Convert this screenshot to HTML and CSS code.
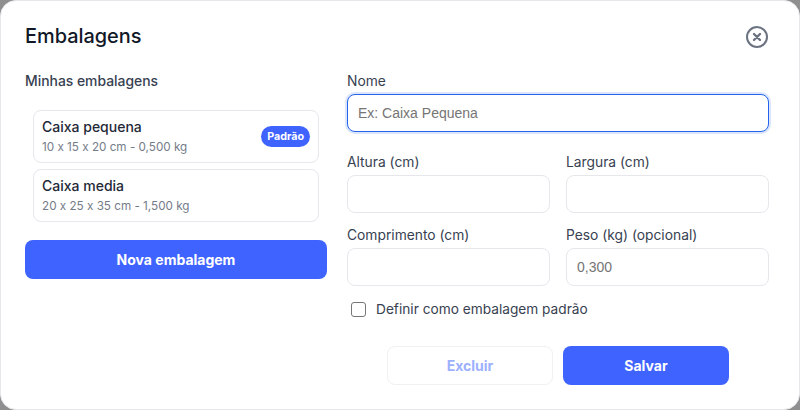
FILE: index.html
```html
<!DOCTYPE html>
<html lang="en">
<head>
    <meta charset="UTF-8">
    <title>Embalagens</title>
    <link rel="stylesheet" href="styles.css">
</head>
<body>
    <div class="modal">
        <!-- Header -->
        <div class="modal-header">
            <h1>Embalagens</h1>
            <button class="close-btn" aria-label="Fechar">
                <svg width="24" height="24" viewBox="0 0 24 24" fill="none" stroke="#6b7280" stroke-width="2" stroke-linecap="round">
                    <circle cx="12" cy="12" r="10"/>
                    <path d="M9 9l6 6M15 9l-6 6" stroke-width="2.4"/>
                </svg>
            </button>
        </div>

        <div class="modal-body">
            <!-- Saved boxes -->
            <div class="box-column">
                <h2>Minhas embalagens</h2>
                <div class="box-list">
                    <div class="box-card">
                        <div class="box-text">
                            <div class="box-name">Caixa pequena</div>
                            <div class="box-info">10 x 15 x 20 cm - 0,500 kg</div>
                        </div>
                        <span class="badge">Padrão</span>
                    </div>
                    <div class="box-card">
                        <div class="box-text">
                            <div class="box-name">Caixa media</div>
                            <div class="box-info">20 x 25 x 35 cm - 1,500 kg</div>
                        </div>
                    </div>
                </div>
                <button class="btn btn-primary btn-new">Nova embalagem</button>
            </div>

            <!-- Form -->
            <form class="box-form">
                <div class="field">
                    <label for="nome">Nome</label>
                    <input type="text" id="nome" class="focused" placeholder="Ex: Caixa Pequena">
                </div>
                <div class="field-grid">
                    <div class="field">
                        <label for="altura">Altura (cm)</label>
                        <input type="text" id="altura">
                    </div>
                    <div class="field">
                        <label for="largura">Largura (cm)</label>
                        <input type="text" id="largura">
                    </div>
                    <div class="field">
                        <label for="comprimento">Comprimento (cm)</label>
                        <input type="text" id="comprimento">
                    </div>
                    <div class="field">
                        <label for="peso">Peso (kg) (opcional)</label>
                        <input type="text" id="peso" placeholder="0,300">
                    </div>
                </div>
                <label class="check-row">
                    <span class="check-box"></span>
                    Definir como embalagem padrão
                </label>
                <div class="form-actions">
                    <button type="button" class="btn btn-disabled">Excluir</button>
                    <button type="button" class="btn btn-primary">Salvar</button>
                </div>
            </form>
        </div>
    </div>
</body>
</html>
```

FILE: styles.css
```css
body {
    margin: 0;
    width: 800px;
    height: 410px;
    overflow: hidden;
    background: #8f8f8f;
    font-family: "Inter", "Liberation Sans", sans-serif;
    font-feature-settings: "calt" 0;
    color: #1f2937;
}

.modal {
    box-sizing: border-box;
    width: 800px;
    height: 410px;
    background: #fff;
    border: 1px solid #e5e7eb;
    border-radius: 16px;
    padding: 0 30px 0 24px;
}

/* Header */
.modal-header {
    display: flex;
    justify-content: space-between;
    align-items: center;
    height: 71px;
}

.modal-header h1 {
    margin: 0 0 2px;
    font-size: 19.9px;
    font-weight: 500;
    color: #111827;
}

.close-btn {
    display: flex;
    padding: 0;
    border: none;
    background: none;
}

/* Body */
.modal-body {
    display: flex;
    gap: 20px;
}

.box-column {
    width: 302px;
    flex-shrink: 0;
}

.box-column h2 {
    margin: 1px 0 20px;
    font-size: 13.9px;
    line-height: 17px;
    font-weight: 500;
    color: #374151;
}

.box-list {
    display: flex;
    flex-direction: column;
    gap: 6px;
    padding: 0 8px;
    margin-bottom: 18px;
}

.box-card {
    box-sizing: border-box;
    height: 53px;
    display: flex;
    justify-content: space-between;
    align-items: center;
    padding: 0 8px;
    border: 1px solid #e5e7eb;
    border-radius: 8px;
}

.box-text {
    padding-bottom: 1px;
}

.box-name {
    font-size: 14px;
    line-height: 18px;
    font-weight: 500;
    color: #1f2937;
}

.box-info {
    margin-top: 3px;
    font-size: 11.7px;
    line-height: 16px;
    color: #757c89;
}

.badge {
    padding: 2px 6px;
    font-size: 10.7px;
    line-height: 17px;
    font-weight: 700;
    color: #fff;
    background: #3f63ff;
    border-radius: 11px;
}

/* Buttons */
.btn {
    height: 39px;
    border-radius: 8px;
    font-family: inherit;
    font-size: 14px;
    font-weight: 700;
}

.btn-primary {
    border: none;
    background: #3f63ff;
    color: #fff;
}

.btn-new {
    width: 100%;
}

.btn-disabled {
    border: 1px solid #f0f1f3;
    background: #fff;
    color: #9db0ff;
}

/* Form */
.box-form {
    width: 422px;
    padding-top: 1px;
}

.field {
    display: flex;
    flex-direction: column;
}

.field label {
    font-size: 13.8px;
    line-height: 17px;
    color: #374151;
    margin-bottom: 4px;
}

.field input {
    box-sizing: border-box;
    height: 38px;
    padding: 0 10px;
    border: 1px solid #e5e7eb;
    border-radius: 8px;
    outline: none;
    font-family: "Liberation Sans", Arial, sans-serif;
    font-size: 14px;
}

.field input::placeholder {
    color: #757575;
}

.field input.focused {
    border-color: #2563eb;
    box-shadow: 0 0 0 2px #dbe6fd;
}

.field-grid {
    display: grid;
    grid-template-columns: 203px 203px;
    column-gap: 16px;
    row-gap: 14px;
    margin-top: 22px;
}

.check-row {
    display: flex;
    align-items: center;
    gap: 10px;
    margin-top: 14px;
    padding-left: 4px;
    font-size: 13.7px;
    line-height: 18px;
    color: #374151;
}

.check-box {
    box-sizing: border-box;
    width: 15px;
    height: 15px;
    border: 1px solid #767676;
    border-radius: 3px;
    background: #fff;
}

.form-actions {
    display: flex;
    gap: 10px;
    margin-top: 28px;
    padding-left: 40px;
}

.form-actions .btn {
    width: 166px;
}
```
